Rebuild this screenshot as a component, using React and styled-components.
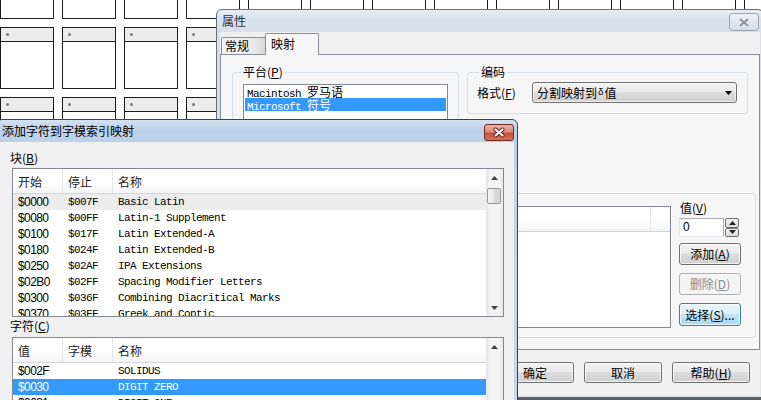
import React from "react";
import styled, { createGlobalStyle, css } from "styled-components";

const UI_FONT = `"Noto Sans CJK SC", "Liberation Sans", sans-serif`;
const MONO_FONT = `"Liberation Mono", "Noto Sans CJK SC", monospace`;
const SANS_FONT = `"Liberation Sans", "Noto Sans CJK SC", sans-serif`;

const GlobalStyle = createGlobalStyle`
  html, body { margin: 0; padding: 0; background: #ffffff; }
  body { font-family: ${UI_FONT}; font-size: 12px; color: #000; }
  * { box-sizing: border-box; }
`;

/* ---------- desktop with the glyph grid ---------- */

const Desktop = styled.div`
  position: relative;
  width: 761px;
  height: 400px;
  overflow: hidden;
  background: #ffffff;
`;

const GlyphGrid = styled.div`
  display: flex;
  flex-wrap: wrap;
  gap: 8px;
  width: 798px;
  margin-top: -43px;
`;

const GlyphCell = styled.div`
  width: 54px;
  height: 62px;
  border: 1px solid #1c1c1c;
  background: #fff;
`;

const GlyphHead = styled.div`
  height: 14px;
  display: flex;
  align-items: center;
  padding-left: 5px;
  background: #ececec;
  border-bottom: 1px solid #1c1c1c;
`;

const GlyphDot = styled.span`
  width: 3px;
  height: 3px;
  border-radius: 50%;
  background: #777;
`;

/* ---------- window chrome ---------- */

const Window = styled.div`
  position: absolute;
  left: ${p => p.$left}px;
  top: ${p => p.$top}px;
  width: ${p => p.$width}px;
  height: ${p => p.$height}px;
  display: flex;
  flex-direction: column;
  padding: 0 3px 2px;
  border: 1px solid ${p => (p.$active ? "#34445a" : "#66707d")};
  border-radius: 6px 6px 0 0;
  background: ${p =>
    p.$active
      ? "linear-gradient(180deg, #d3e1f1 0, #bdd2ea 10px, #bcd1ea 22px, #c4d7ed 100%)"
      : "linear-gradient(180deg, #e6edf5 0, #d7e2ed 10px, #d5e0ec 22px, #dde6ef 100%)"};
  ${p =>
    p.$bottomEdge &&
    css`
      border-bottom: 4px solid #5b6068;
    `}
`;

const TitleBar = styled.div`
  height: 22px;
  flex: none;
  display: flex;
  align-items: flex-start;
  justify-content: space-between;
`;

const Title = styled.div`
  line-height: 22px;
  padding-left: 2px;
  color: ${p => (p.$active ? "#000" : "#333")};
  white-space: nowrap;
`;

const CloseButton = styled.div`
  width: 30px;
  height: ${p => p.$h}px;
  margin-top: ${p => p.$mt}px;
  margin-right: ${p => p.$mr}px;
  display: flex;
  align-items: center;
  justify-content: center;
  border-radius: 3px;
  ${p =>
    p.$active
      ? css`
          border: 1px solid #6d2b22;
          background: linear-gradient(180deg, #eeb0a4 0%, #dd8a79 45%, #c8503c 55%, #d4705a 100%);
        `
      : css`
          border: 1px solid #9aa6b4;
          background: linear-gradient(180deg, #eef2f6 0%, #dfe6ee 50%, #d3dce6 100%);
        `}
`;

const Client = styled.div`
  flex: 1;
  min-height: 0;
  display: flex;
  flex-direction: column;
  background: #f0f0f0;
  overflow: hidden;
  padding: ${p => p.$pad || "0"};
`;

/* ---------- tabs ---------- */

const TabStrip = styled.div`
  height: 22px;
  flex: none;
  display: flex;
  align-items: flex-end;
  padding-left: 1px;
  position: relative;
  z-index: 1;
`;

const Tab = styled.div`
  width: ${p => p.$w}px;
  height: ${p => (p.$active ? 22 : 17)}px;
  margin-bottom: ${p => (p.$active ? -1 : 0)}px;
  margin-left: ${p => (p.$active ? -1 : 0)}px;
  padding-left: ${p => (p.$active ? 5 : 3)}px;
  line-height: ${p => (p.$active ? 20 : 16)}px;
  border: 1px solid #898c95;
  border-bottom: none;
  border-radius: 2px 2px 0 0;
  background: ${p =>
    p.$active ? "#f6f6f6" : "linear-gradient(90deg, #f3f3f3 0%, #ebebeb 70%, #d9d9d9 100%)"};
`;

const TabPanel = styled.div`
  height: 296px;
  flex: none;
  border: 1px solid #898c95;
  background: #f6f6f6;
  padding: 10px 0 0 11px;
  display: flex;
  flex-direction: column;
`;

const TopRow = styled.div`
  display: flex;
  align-items: flex-start;
  gap: 8px;
`;

const GroupBox = styled.fieldset`
  margin: 0;
  min-width: 0;
  width: ${p => p.$w}px;
  height: ${p => p.$h}px;
  padding: 0 0 0 ${p => p.$pl}px;
  border: 1px solid #d5dfe5;
  border-radius: 3px;
`;

const Legend = styled.legend`
  margin-left: ${p => p.$ml}px;
  padding: 0 2px;
  line-height: 14px;
  font-size: 12px;
`;

const ListBox = styled.div`
  margin-top: 5px;
  width: 205px;
  height: 100px;
  border: 1px solid #828790;
  background: #fff;
`;

const ListItem = styled.div`
  height: 13px;
  margin: 0 1px;
  padding-left: 2px;
  line-height: 13px;
  font-family: ${MONO_FONT};
  font-size: 11px;
  letter-spacing: -0.6px;
  white-space: nowrap;
  background: ${p => (p.$selected ? "#3399ff" : "transparent")};
  color: ${p => (p.$selected ? "#fff" : "#000")};
`;

const Cjk = styled.span`
  font-family: ${UI_FONT};
  font-size: 12px;
  letter-spacing: 0;
`;

const FormatRow = styled.div`
  margin-top: 3px;
  display: flex;
  align-items: center;
`;

const FormatLabel = styled.div`
  width: 55px;
  line-height: 14px;
`;

const Combo = styled.div`
  width: 205px;
  height: 21px;
  display: flex;
  align-items: center;
  justify-content: space-between;
  padding: 0 4px 0 4px;
  border: 1px solid #707070;
  border-radius: 3px;
  background: linear-gradient(180deg, #f2f2f2 0%, #ebebeb 45%, #dddddd 50%, #cfcfcf 100%);
  box-shadow: inset 0 0 0 1px rgba(255, 255, 255, 0.7);
  line-height: 16px;
`;

const Delta = styled.span`
  font-family: ${MONO_FONT};
  font-size: 9px;
  vertical-align: 3px;
  margin: 0 1px;
`;

const MapGroup = styled.div`
  margin-top: 8px;
  width: 524px;
  height: 145px;
  border: 1px solid #d5dfe5;
  border-radius: 3px;
  display: flex;
  gap: 8px;
  padding-left: 10px;
`;

const MapList = styled.div`
  margin-top: 12px;
  width: 428px;
  height: 122px;
  border: 1px solid #828790;
  background: #fff;
`;

const SideColumn = styled.div`
  width: 62px;
  padding-top: 7px;
  display: flex;
  flex-direction: column;
`;

const SideLabel = styled.div`
  line-height: 14px;
  padding-left: 1px;
`;

const SpinRow = styled.div`
  margin-top: 3px;
  display: flex;
  gap: 1px;
`;

const SpinInput = styled.div`
  width: 45px;
  height: 19px;
  border: 1px solid #abadb3;
  border-left-color: #e2e3ea;
  border-bottom-color: #e3e9ef;
  background: #fff;
  padding-left: 3px;
  line-height: 17px;
  font-family: ${SANS_FONT};
  font-size: 12px;
`;

const SpinButtons = styled.div`
  width: 14px;
  height: 19px;
  display: flex;
  flex-direction: column;
`;

const SpinHalf = styled.div`
  flex: 1;
  display: flex;
  align-items: center;
  justify-content: center;
  border: 1px solid #707070;
  border-radius: 2px;
  background: linear-gradient(180deg, #f2f2f2, #dcdcdc);
`;

const Button = styled.div`
  width: ${p => p.$w}px;
  height: ${p => p.$h}px;
  margin-top: ${p => p.$mt || 0}px;
  display: flex;
  align-items: center;
  justify-content: center;
  white-space: nowrap;
  border: 1px solid #707070;
  border-radius: 3px;
  background: linear-gradient(180deg, #f2f2f2 0%, #ebebeb 45%, #dddddd 50%, #cfcfcf 100%);
  box-shadow: inset 0 0 0 1px rgba(255, 255, 255, 0.75);
  line-height: 14px;
  ${p =>
    p.$disabled &&
    css`
      border-color: #adb2b5;
      background: #f4f4f4;
      box-shadow: none;
      color: #8a8a8a;
    `}
  ${p =>
    p.$focus &&
    css`
      border-color: #3c7fb1;
      background: linear-gradient(180deg, #eaf6fd 0%, #d9f0fc 45%, #bee6fd 50%, #a7d9f5 100%);
    `}
`;

const BottomBar = styled.div`
  margin-top: 12px;
  padding-right: 10px;
  display: flex;
  justify-content: flex-end;
  gap: 10px;
`;

/* ---------- list views ---------- */

const FieldLabel = styled.div`
  line-height: 14px;
  margin-top: ${p => p.$mt || 0}px;
`;

const ListView = styled.div`
  margin-left: 2px;
  margin-top: ${p => p.$mt}px;
  width: 492px;
  height: ${p => p.$h}px;
  flex: none;
  display: flex;
  border: 1px solid #828790;
  background: #fff;
`;

const ListMain = styled.div`
  flex: 1;
  min-width: 0;
  overflow: hidden;
`;

const Header = styled.div`
  display: flex;
  height: 25px;
  border-bottom: 1px solid #d5d5d5;
  background: linear-gradient(180deg, #ffffff 0%, #ffffff 50%, #f4f5f7 100%);
`;

const HeaderCell = styled.div`
  flex: ${p => (p.$w ? `0 0 ${p.$w}px` : "1")};
  padding: 2px 0 0 5px;
  line-height: 22px;
  color: #1e1e1e;
  border-right: ${p => (p.$last ? "none" : "1px solid #e5e5e5")};
`;

const Row = styled.div`
  display: flex;
  height: 16px;
  line-height: 16px;
  background: ${p =>
    p.$state === "selected" ? "#3399ff" : p.$state === "hot" ? "#ececec" : "transparent"};
  color: ${p => (p.$state === "selected" ? "#fff" : "#000")};
`;

const Cell = styled.div`
  flex: ${p => (p.$w ? `0 0 ${p.$w}px` : "1")};
  padding-left: 5px;
  white-space: nowrap;
  overflow: hidden;
  font-family: ${p => (p.$sans ? SANS_FONT : MONO_FONT)};
  font-size: ${p => (p.$sans ? 12 : 11)}px;
  letter-spacing: ${p => (p.$sans ? -0.6 : -0.6)}px;
`;

const ScrollBar = styled.div`
  width: 17px;
  flex: none;
  display: flex;
  flex-direction: column;
  background: linear-gradient(90deg, #e6e6e6 0%, #f2f2f2 25%, #f4f4f4 75%, #e9e9e9 100%);
`;

const ScrollArrow = styled.div`
  height: 17px;
  flex: none;
  display: flex;
  align-items: center;
  justify-content: center;
`;

const ScrollThumb = styled.div`
  height: 16px;
  flex: none;
  margin: 2px 2px 0 1px;
  border: 1px solid #979797;
  border-radius: 2px;
  background: linear-gradient(90deg, #f4f4f4 0%, #e9e9e9 50%, #d8d8d8 51%, #d4d4d4 100%);
`;

const ScrollTrack = styled.div`
  flex: 1;
`;

/* ---------- small drawings ---------- */

const Triangle = ({ up, color = "#404040" }) => (
  <svg width="7" height="4" viewBox="0 0 7 4">
    <path d={up ? "M0 4H7L3.5 0Z" : "M0 0H7L3.5 4Z"} fill={color} />
  </svg>
);

const CloseGlyph = ({ active }) => (
  <svg width="14" height="11" viewBox="0 0 14 11">
    <path
      d="M3.5 2.5L10.5 8.5M10.5 2.5L3.5 8.5"
      stroke={active ? "#5a1e15" : "#f3f6f9"}
      strokeWidth="4"
      strokeLinecap="round"
    />
    <path
      d="M3.5 2.5L10.5 8.5M10.5 2.5L3.5 8.5"
      stroke={active ? "#ffffff" : "#8593a4"}
      strokeWidth="2.2"
      strokeLinecap="round"
    />
  </svg>
);

const Scroller = ({ thumb }) => (
  <ScrollBar>
    <ScrollArrow>
      <Triangle up />
    </ScrollArrow>
    {thumb && <ScrollThumb />}
    <ScrollTrack />
    <ScrollArrow>
      <Triangle />
    </ScrollArrow>
  </ScrollBar>
);

/* ---------- data ---------- */

const blocks = [
  ["$0000", "$007F", "Basic Latin"],
  ["$0080", "$00FF", "Latin-1 Supplement"],
  ["$0100", "$017F", "Latin Extended-A"],
  ["$0180", "$024F", "Latin Extended-B"],
  ["$0250", "$02AF", "IPA Extensions"],
  ["$02B0", "$02FF", "Spacing Modifier Letters"],
  ["$0300", "$036F", "Combining Diacritical Marks"],
  ["$0370", "$03FF", "Greek and Coptic"],
];

const chars = [
  ["$002F", "", "SOLIDUS"],
  ["$0030", "", "DIGIT ZERO"],
  ["$0031", "", "DIGIT ONE"],
];

const glyphs = Array.from({ length: 13 * 7 }, (_, i) => i);

/* ---------- windows ---------- */

const PropertiesWindow = () => (
  <Window $left={216} $top={9} $width={548} $height={392} $bottomEdge>
    <TitleBar>
      <Title>属性</Title>
      <CloseButton $h={18} $mt={3} $mr={1}>
        <CloseGlyph />
      </CloseButton>
    </TitleBar>
    <Client>
      <TabStrip>
        <Tab $w={45}>常规</Tab>
        <Tab $w={54} $active>
          映射
        </Tab>
      </TabStrip>
      <TabPanel>
        <TopRow>
          <GroupBox $w={227} $h={120} $pl={10}>
            <Legend $ml={-2}>
              平台(<u>P</u>)
            </Legend>
            <ListBox>
              <ListItem>
                Macintosh <Cjk>罗马语</Cjk>
              </ListItem>
              <ListItem $selected>
                Microsoft <Cjk>符号</Cjk>
              </ListItem>
            </ListBox>
          </GroupBox>
          <GroupBox $w={281} $h={49} $pl={9}>
            <Legend $ml={2}>编码</Legend>
            <FormatRow>
              <FormatLabel>
                格式(<u>F</u>)
              </FormatLabel>
              <Combo>
                <span>
                  分割映射到<Delta>δ</Delta>值
                </span>
                <Triangle color="#000" />
              </Combo>
            </FormatRow>
          </GroupBox>
        </TopRow>
        <MapGroup>
          <MapList>
            <Header>
              <HeaderCell>&nbsp;</HeaderCell>
              <HeaderCell $w={19} $last />
            </Header>
          </MapList>
          <SideColumn>
            <SideLabel>
              值(<u>V</u>)
            </SideLabel>
            <SpinRow>
              <SpinInput>0</SpinInput>
              <SpinButtons>
                <SpinHalf>
                  <Triangle up color="#222" />
                </SpinHalf>
                <SpinHalf>
                  <Triangle color="#222" />
                </SpinHalf>
              </SpinButtons>
            </SpinRow>
            <Button $w={62} $h={22} $mt={6}>
              添加(<u>A</u>)
            </Button>
            <Button $w={62} $h={22} $mt={8} $disabled>
              删除(<u>D</u>)
            </Button>
            <Button $w={62} $h={23} $mt={8} $focus>
              选择(<u>S</u>)...
            </Button>
          </SideColumn>
        </MapGroup>
      </TabPanel>
      <BottomBar>
        <Button $w={78} $h={21}>
          确定
        </Button>
        <Button $w={78} $h={21}>
          取消
        </Button>
        <Button $w={78} $h={21}>
          帮助(<u>H</u>)
        </Button>
      </BottomBar>
    </Client>
  </Window>
);

const AddCharWindow = () => (
  <Window $left={-4} $top={119} $width={522} $height={300} $active>
    <TitleBar>
      <Title $active>添加字符到字模索引映射</Title>
      <CloseButton $h={17} $mt={4} $mr={0} $active>
        <CloseGlyph active />
      </CloseButton>
    </TitleBar>
    <Client $pad="9px 0 0 10px">
      <FieldLabel>
        块(<u>B</u>)
      </FieldLabel>
      <ListView $mt={3} $h={149}>
        <ListMain>
          <Header>
            <HeaderCell $w={50}>开始</HeaderCell>
            <HeaderCell $w={50}>停止</HeaderCell>
            <HeaderCell $last>名称</HeaderCell>
          </Header>
          {blocks.map(([start, stop, name], i) => (
            <Row key={start} $state={i === 0 ? "hot" : undefined}>
              <Cell $w={50} $sans>
                {start}
              </Cell>
              <Cell $w={50}>{stop}</Cell>
              <Cell>{name}</Cell>
            </Row>
          ))}
        </ListMain>
        <Scroller thumb />
      </ListView>
      <FieldLabel $mt={2}>
        字符(<u>C</u>)
      </FieldLabel>
      <ListView $mt={4} $h={90}>
        <ListMain>
          <Header>
            <HeaderCell $w={50}>值</HeaderCell>
            <HeaderCell $w={50}>字模</HeaderCell>
            <HeaderCell $last>名称</HeaderCell>
          </Header>
          {chars.map(([code, glyph, name], i) => (
            <Row key={code} $state={i === 1 ? "selected" : undefined}>
              <Cell $w={50} $sans>
                {code}
              </Cell>
              <Cell $w={50}>{glyph}</Cell>
              <Cell>{name}</Cell>
            </Row>
          ))}
        </ListMain>
        <Scroller />
      </ListView>
    </Client>
  </Window>
);

export default function App() {
  return (
    <>
      <GlobalStyle />
      <Desktop>
        <GlyphGrid>
          {glyphs.map(i => (
            <GlyphCell key={i}>
              <GlyphHead>
                <GlyphDot />
              </GlyphHead>
            </GlyphCell>
          ))}
        </GlyphGrid>
        <PropertiesWindow />
        <AddCharWindow />
      </Desktop>
    </>
  );
}
